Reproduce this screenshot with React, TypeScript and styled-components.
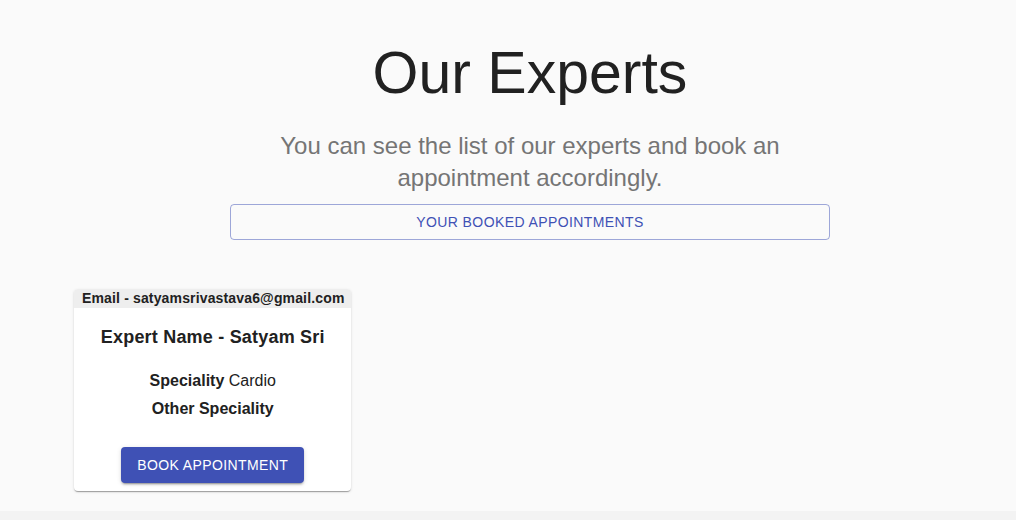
import React from "react";
import styled, { createGlobalStyle } from "styled-components";

const Global = createGlobalStyle`
  html, body { margin: 0; padding: 0; background: #f3f3f3; }
  body { font-family: "Liberation Sans", Arial, sans-serif; }
`;

const Page = styled.div`
  background: #fafafa;
  height: 511px;
  box-sizing: border-box;
  padding-top: 33px;
`;

const Hero = styled.section`
  display: flex;
  flex-direction: column;
  align-items: center;
  padding-left: 44px;
`;

const Title = styled.h1`
  margin: 0;
  font-size: 59px;
  font-weight: 400;
  line-height: 80px;
  color: #212121;
`;

const Subtitle = styled.p`
  margin: 17px 0 0;
  width: 600px;
  text-align: center;
  font-size: 24px;
  line-height: 32px;
  color: #757575;
`;

const OutlineButton = styled.button`
  margin-top: 10px;
  width: 600px;
  height: 36px;
  background: transparent;
  border: 1px solid rgba(63, 81, 181, 0.5);
  border-radius: 4px;
  color: #3f51b5;
  font-family: "Liberation Sans", Arial, sans-serif;
  font-size: 14px;
  letter-spacing: 0.4px;
  text-transform: uppercase;
  cursor: pointer;
`;

const CardRow = styled.div`
  display: flex;
  padding: 49px 0 0 74px;
`;

const Card = styled.div`
  background: #fff;
  border-radius: 4px;
  box-shadow: 0 2px 1px -1px rgba(0,0,0,0.2), 0 1px 1px 0 rgba(0,0,0,0.14), 0 1px 3px 0 rgba(0,0,0,0.12);
  overflow: hidden;
  display: flex;
  flex-direction: column;
  align-items: center;
  padding-bottom: 8px;
`;

const CardHeader = styled.div`
  align-self: stretch;
  background: #eeeeee;
  padding: 0 7px 0 8px;
  height: 19px;
  line-height: 19px;
  font-size: 14px;
  font-weight: 700;
  letter-spacing: 0.15px;
  color: #212121;
  text-align: center;
`;

const ExpertName = styled.h3`
  margin: 18px 0 0;
  font-size: 18px;
  line-height: 22px;
  font-weight: 700;
  letter-spacing: 0.2px;
  color: #212121;
`;

const InfoLine = styled.p<{ $top: number }>`
  margin: ${(p) => p.$top}px 0 0;
  font-size: 16px;
  line-height: 24px;
  color: #212121;
  b { font-weight: 700; }
`;

const ContainedButton = styled.button`
  margin-top: 26px;
  height: 36px;
  padding: 0 16px;
  background: #3f51b5;
  color: #fff;
  border: none;
  border-radius: 4px;
  font-family: "Liberation Sans", Arial, sans-serif;
  font-size: 14px;
  letter-spacing: 0.4px;
  text-transform: uppercase;
  box-shadow: 0 3px 1px -2px rgba(0,0,0,0.2), 0 2px 2px 0 rgba(0,0,0,0.14), 0 1px 5px 0 rgba(0,0,0,0.12);
  cursor: pointer;
`;

export default function App() {
  return (
    <>
      <Global />
      <Page>
        <Hero>
          <Title>Our Experts</Title>
          <Subtitle>You can see the list of our experts and book an appointment accordingly.</Subtitle>
          <OutlineButton>Your Booked Appointments</OutlineButton>
        </Hero>
        <CardRow>
          <Card>
            <CardHeader>Email - satyamsrivastava6@gmail.com</CardHeader>
            <ExpertName>Expert Name - Satyam Sri</ExpertName>
            <InfoLine $top={21}><b>Speciality</b> Cardio</InfoLine>
            <InfoLine $top={4}><b>Other Speciality</b></InfoLine>
            <ContainedButton>Book Appointment</ContainedButton>
          </Card>
        </CardRow>
      </Page>
    </>
  );
}
